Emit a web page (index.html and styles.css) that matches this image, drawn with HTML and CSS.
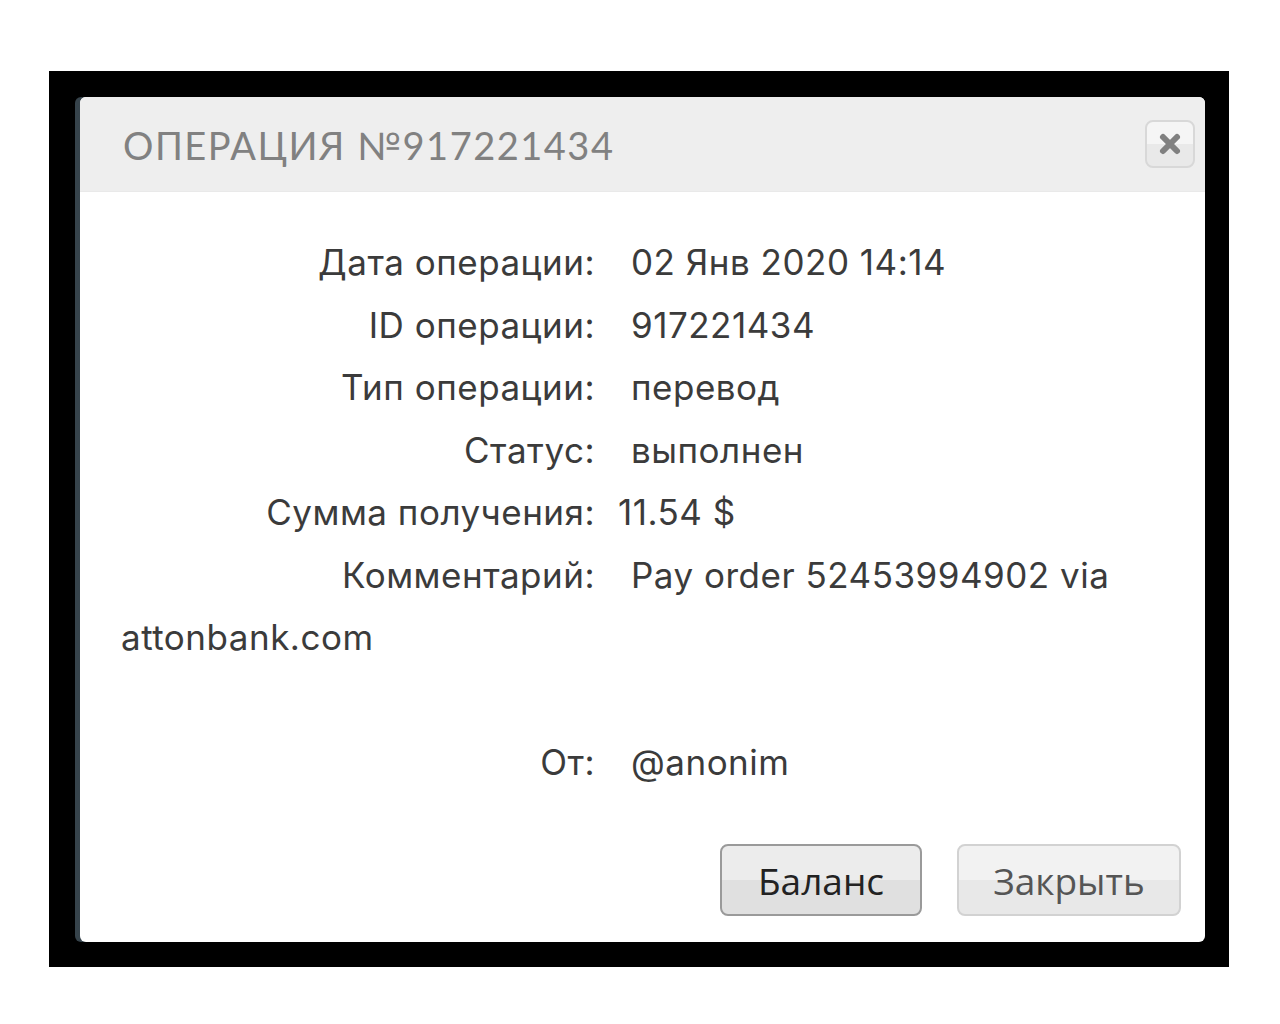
FILE: index.html
```html
<!DOCTYPE html>
<html lang="ru">
<head>
  <meta charset="UTF-8">
  <title>Операция №917221434</title>
  <link rel="stylesheet" href="styles.css">
</head>
<body>
  <div class="frame">
    <div class="dialog">
      <div class="dialog-head">
        <h2 class="dialog-title">Операция №917221434</h2>
        <button class="close-btn" title="Закрыть">
          <svg width="24" height="24" viewBox="0 0 24 24">
            <path d="M5 5 L19 19 M19 5 L5 19" stroke="#808080" stroke-width="6" stroke-linecap="round"/>
          </svg>
        </button>
      </div>

      <div class="dialog-body">
        <div class="row"><span class="label">Дата операции:</span>02 Янв 2020 14:14</div>
        <div class="row"><span class="label">ID операции:</span>917221434</div>
        <div class="row"><span class="label">Тип операции:</span>перевод</div>
        <div class="row"><span class="label">Статус:</span>выполнен</div>
        <div class="row"><span class="label tight">Сумма получения:</span>11.54 $</div>
        <p class="row"><span class="label">Комментарий:</span>Pay order 52453994902 via attonbank.com</p>
        <div class="row empty"></div>
        <div class="row"><span class="label">От:</span>@anonim</div>
      </div>

      <div class="dialog-foot">
        <button class="btn btn-main">Баланс</button>
        <button class="btn btn-close">Закрыть</button>
      </div>
    </div>
  </div>
</body>
</html>
```

FILE: styles.css
```css
body {
  margin: 0;
  background: #fff;
  font-family: Inter, "Noto Sans", sans-serif;
}

.frame {
  margin: 71px 0 0 49px;
  width: 1180px;
  height: 896px;
  box-sizing: border-box;
  background: #000;
  padding: 26px 24px 25px 31px;
}

.dialog {
  height: 100%;
  background: #fff;
  border-radius: 6px;
  box-shadow: -5px 0 0 #36434b;
  display: flex;
  flex-direction: column;
  overflow: hidden;
}

.dialog-head {
  height: 94px;
  background: #eeeeee;
  border-bottom: 1px solid #e9e9e9;
  display: flex;
  align-items: center;
  justify-content: space-between;
  padding: 0 10px 0 43px;
}

.dialog-title {
  margin: 2px 0 0;
  font-family: Lato, sans-serif;
  font-weight: 400;
  font-size: 38px;
  letter-spacing: 1.5px;
  text-transform: uppercase;
  color: #818181;
}

.close-btn {
  width: 50px;
  height: 48px;
  border: 2px solid #d8d8d8;
  border-radius: 8px;
  background: linear-gradient(#f5f5f5 50%, #e9e9e9 50%);
  display: flex;
  align-items: center;
  justify-content: center;
  padding: 0;
}

.dialog-body {
  flex: 1;
  padding: 39px 40px 0 41px;
  font-size: 35px;
  letter-spacing: 0.5px;
  line-height: 62.5px;
  color: #3b3b3b;
}

.row {
  margin: 0;
}

.label {
  display: inline-block;
  width: 474px;
  text-align: right;
  margin-right: 36px;
}

.label.tight {
  margin-right: 23px;
}

.row.empty {
  height: 62.5px;
}

.dialog-foot {
  display: flex;
  justify-content: flex-end;
  gap: 35px;
  padding: 0 24px 26px 0;
}

.btn {
  height: 72px;
  padding: 0;
  font-family: "Open Sans", sans-serif;
  font-size: 37px;
  color: #555;
  border: 2px solid #d2d2d2;
  border-radius: 8px;
  background: linear-gradient(#f2f2f2 50%, #e8e8e8 50%);
}

.btn-main {
  width: 202px;
  color: #222;
  border-color: #9a9a9a;
  background: linear-gradient(#ececec 50%, #e0e0e0 50%);
}

.btn-close {
  width: 224px;
}
```
